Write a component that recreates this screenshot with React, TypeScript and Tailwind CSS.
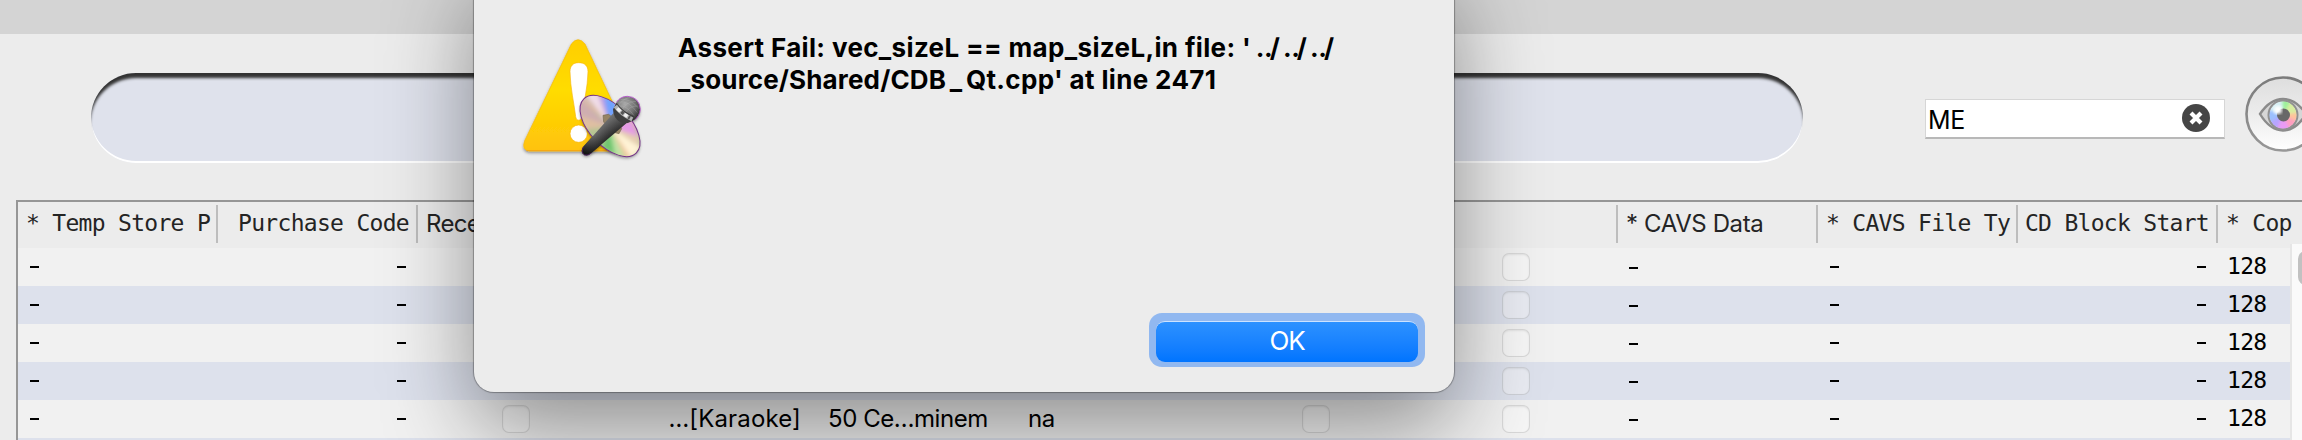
import React from 'react';

const mono = 'font-["DejaVu_Sans_Mono",monospace]';

type RowData = { artist?: boolean; title?: string; shaded?: boolean };

const rows: RowData[] = [
  {},
  { shaded: true },
  {},
  { shaded: true, title: '…[Karaoke]' },
  { title: '…[Karaoke]', artist: true },
];

function Check() {
  return (
    <span className="block h-7 w-7 rounded-[7px] border border-black/12 bg-white/35 shadow-[inset_0_1px_2px_rgba(0,0,0,0.08)]" />
  );
}

function Dash({ sans = false }: { sans?: boolean }) {
  return <span className={`block h-[2px] w-[9px] bg-black ${sans ? 'mt-[2px]' : ''}`} />;
}

function HeadCell({ children, className = '' }: { children?: React.ReactNode; className?: string }) {
  return (
    <div className="flex h-[46px] w-[200px] shrink-0 pt-[3px]">
      <div
        className={`flex h-[38px] w-full items-center overflow-hidden whitespace-pre border-r-2 border-[#bdbdbd] text-[23px] tracking-[-0.7px] text-[#242424] ${className}`}
      >
        {children}
      </div>
    </div>
  );
}

function Cell({ children, className = '' }: { children?: React.ReactNode; className?: string }) {
  return (
    <div className={`flex h-[38px] w-[200px] shrink-0 items-center whitespace-pre text-[24px] leading-none text-black ${className}`}>
      {children}
    </div>
  );
}

function Row({ row }: { row: RowData }) {
  return (
    <div className={`flex h-[38px] ${row.shaded ? 'bg-[#dde1ec]' : 'bg-[#f1f1f1]'}`}>
      <Cell className="pl-3"><Dash /></Cell>
      <Cell className="justify-end pr-3"><Dash /></Cell>
      <Cell className="pl-[84px]">{row.artist && <Check />}</Cell>
      <Cell className="justify-end pr-[17px] tracking-[0.15px]">{row.title}</Cell>
      <Cell className="pl-[10px] tracking-[-0.45px]">{row.artist && '50 Ce…minem'}</Cell>
      <Cell className="pl-[10px] tracking-[-0.5px]">{row.artist && 'na'}</Cell>
      <Cell className="pl-[84px]">{row.artist && <Check />}</Cell>
      <Cell className="pl-[84px]"><Check /></Cell>
      <Cell className="pl-[11px]"><Dash sans /></Cell>
      <Cell className="pl-3"><Dash /></Cell>
      <Cell className="justify-end pr-3"><Dash /></Cell>
      <Cell className={`pb-px pl-[9px] tracking-[-0.7px] ${mono} !text-[23px]`}>128</Cell>
    </div>
  );
}

function AlertIcon() {
  return (
    <svg width="150" height="150" viewBox="0 0 450 450">
      <defs>
        <linearGradient id="tri" x1="0" y1="0" x2="0" y2="1">
          <stop offset="0" stopColor="#ffce00" />
          <stop offset=".45" stopColor="#ffdc00" />
          <stop offset="1" stopColor="#ffc20a" />
        </linearGradient>
        <linearGradient id="disc" x1="0" y1="0" x2="1" y2="1">
          <stop offset="0" stopColor="#cfc5d0" />
          <stop offset=".35" stopColor="#d9b9a4" />
          <stop offset=".6" stopColor="#a7cf95" />
          <stop offset="1" stopColor="#f0dfb8" />
        </linearGradient>
        <linearGradient id="handle" gradientUnits="userSpaceOnUse" x1="250" y1="322" x2="290" y2="362">
          <stop offset="0" stopColor="#858585" />
          <stop offset=".35" stopColor="#696969" />
          <stop offset="1" stopColor="#242424" />
        </linearGradient>
        <linearGradient id="handleShade" gradientUnits="userSpaceOnUse" x1="320" y1="290" x2="222" y2="398">
          <stop offset="0" stopColor="#777" stopOpacity=".3" />
          <stop offset=".6" stopColor="#333" stopOpacity=".1" />
          <stop offset="1" stopColor="#000" stopOpacity=".75" />
        </linearGradient>
        <radialGradient id="head" cx=".4" cy=".3" r=".7">
          <stop offset="0" stopColor="#aaa" />
          <stop offset=".6" stopColor="#707070" />
          <stop offset="1" stopColor="#303030" />
        </radialGradient>
        <filter id="soft" x="-20%" y="-20%" width="140%" height="140%">
          <feDropShadow dx="0" dy="5" stdDeviation="4" floodColor="#000" floodOpacity=".4" />
        </filter>
        <filter id="blurDisc" x="-10%" y="-10%" width="120%" height="120%"><feGaussianBlur stdDeviation="6" /></filter>
        <clipPath id="discClip"><ellipse cx="300" cy="318" rx="113" ry="61" transform="rotate(46 300 318)" /></clipPath>
      </defs>
      <path
        d="M184 72 Q204 46 225 72 L364 365 Q372 393 350 393 H58 Q34 390 44 362 Z"
        fill="url(#tri)" stroke="#f5b80c" strokeWidth="2" filter="url(#soft)"
      />
      <path d="M49 392 H352" stroke="#f3a414" strokeWidth="3" />
      <path
        d="M180 155 C180 138 189 128 206 128 C225 128 234 138 234 155 C233 205 221 248 215 290 C213 304 199 304 197 290 C192 248 181 205 180 155Z"
        fill="#fff" stroke="#f8b60e" strokeWidth="2"
      />
      <circle cx="206" cy="341" r="26" fill="#fff" stroke="#f8b60e" strokeWidth="2" />
      <g filter="url(#soft)">
        <ellipse cx="300" cy="318" rx="113" ry="61" transform="rotate(46 300 318)" fill="url(#disc)" />
        <circle cx="352" cy="268" r="38" fill="#555" />
        <path d="M310 280 L349 310 L243 400 Q228 412 218 400 Q212 392 220 380 Z" fill="#333" />
      </g>
      <g clipPath="url(#discClip)">
        <g filter="url(#blurDisc)">
          <path d="M299 319 L190 220 L215 320Z" fill="#cfaeb0" />
          <path d="M299 319 L205 285 L225 350Z" fill="#dfbfa2" />
          <path d="M299 319 L225 220 L262 220Z" fill="#f1dde8" />
          <path d="M299 319 L262 215 L285 230Z" fill="#c59de0" />
          <path d="M299 319 L280 225 L315 240 L325 270Z" fill="#6fa2ff" />
          <path d="M299 319 L215 330 L270 390Z" fill="#b5c493" />
          <path d="M299 319 L275 385 L322 410Z" fill="#6fc66f" />
          <path d="M299 319 L315 405 L345 410Z" fill="#bfe2a6" />
          <path d="M299 319 L345 410 L375 415Z" fill="#f2c79f" />
          <path d="M299 319 L365 415 L395 385Z" fill="#fff3d5" />
          <path d="M299 319 L395 385 L385 345Z" fill="#e6cdb0" />
          <path d="M299 319 L385 350 L365 300Z" fill="#e59ae6" />
        </g>
      </g>
      <ellipse cx="300" cy="318" rx="113" ry="61" transform="rotate(46 300 318)" fill="none" stroke="#75308a" strokeWidth="3" />
      <path d="M279 286 L296 283 L322 304 L335 326 L327 341 L308 336 L281 306Z" fill="#968466" stroke="#756a50" strokeWidth="2" />
      <path d="M310 280 L349 310 L243 400 Q228 412 218 400 Q212 392 220 380 Z" fill="url(#handle)" />
      <path d="M310 280 L349 310 L243 400 Q228 412 218 400 Q212 392 220 380 Z" fill="url(#handleShade)" />
      <path d="M220 381 Q212 398 224 405 Q234 408 244 399" fill="none" stroke="#4b215c" strokeWidth="3" />
      <circle cx="352" cy="268" r="38" fill="url(#head)" />
      <g stroke="#b7b7b7" strokeOpacity=".45" strokeWidth="2" fill="none">
        <path d="M326 246 Q355 240 382 278 M332 238 Q362 235 387 266 M325 257 Q354 257 374 290" />
        <path d="M378 244 Q347 244 333 275 M386 258 Q356 256 344 283 M360 232 Q332 238 323 263" />
      </g>
      <path d="M309 268 L320 248 Q337 274 375 289 L360 306 Q348 314 330 306 Q309 293 309 268Z" fill="#3f3f3f" />
      <path d="M316 258 Q332 281 367 298" fill="none" stroke="#b2b2b2" strokeWidth="12" />
      <path d="M322 265 l9 9 M343 283 l9 6" stroke="#f0f0f0" strokeWidth="10" />
      <path d="M334 275 l7 6 M355 291 l5 3" stroke="#555" strokeWidth="10" />
      <path d="M320 246 Q332 229 352 229 Q388 231 391 268 Q389 288 374 300" fill="none" stroke="#b45ac8" strokeWidth="3" />
    </svg>
  );
}

function EyeIcon() {
  return (
    <svg width="78" height="78" viewBox="0 0 78 78" className="shrink-0">
      <defs>
        <linearGradient id="eyeBg" x1="0" y1="0" x2="0" y2="1">
          <stop offset="0" stopColor="#dedede" />
          <stop offset=".5" stopColor="#ececec" />
          <stop offset="1" stopColor="#fff" />
        </linearGradient>
        <linearGradient id="ring" x1="0" y1="0" x2="0" y2="1">
          <stop offset="0" stopColor="#7b7b7b" />
          <stop offset="1" stopColor="#979797" />
        </linearGradient>
        <filter id="irisBlur"><feGaussianBlur stdDeviation="1.6" /></filter>
        <clipPath id="irisClip"><circle cx="39" cy="40" r="13.5" /></clipPath>
      </defs>
      <circle cx="39" cy="39" r="36.5" fill="url(#eyeBg)" stroke="url(#ring)" strokeWidth="2.6" />
      <path d="M16 39 Q26 24 39 24 Q52 24 62 39 Q52 55.5 39 55.5 Q26 55.5 16 39Z" fill="#d6d6d6" stroke="#8b8b8b" strokeWidth="2.4" />
      <circle cx="39" cy="40" r="15.5" fill="#919191" />
      <g clipPath="url(#irisClip)">
        <circle cx="39" cy="40" r="13.5" fill="#ddd" />
        <g filter="url(#irisBlur)">
          <path d="M39 40 L25 36 L30 24 L40 22Z" fill="#d8f0f5" />
          <path d="M39 40 L38 22 L50 26Z" fill="#9df09a" />
          <path d="M39 40 L48 24 L57 40Z" fill="#d8eea0" />
          <path d="M39 40 L57 37 L54 50Z" fill="#ffc39c" />
          <path d="M39 40 L55 47 L43 57Z" fill="#ff9fc0" />
          <path d="M39 40 L47 57 L30 56Z" fill="#e99bf5" />
          <path d="M39 40 L32 57 L23 45Z" fill="#b7a4ff" />
          <path d="M39 40 L24 48 L22 34Z" fill="#9cc0ff" />
        </g>
        <circle cx="39.5" cy="40" r="6.5" fill="#686868" />
        <circle cx="34" cy="35" r="4" fill="#fff" filter="url(#irisBlur)" />
      </g>
    </svg>
  );
}

function Pill() {
  return (
    <div className="h-[90px] w-[1712px] shrink-0 overflow-hidden rounded-[45px] bg-[#dfe2ec] shadow-[inset_0_6px_3px_-1px_#333,inset_0_-2px_0_0_#fff]" />
  );
}

export default function App() {
  return (
    <div className='relative flex h-[440px] w-[2302px] flex-col overflow-hidden bg-[#ececec] font-["Inter",sans-serif]'>
      <div className="h-[34px] shrink-0 bg-[#d4d4d4]" />
      <div className="flex h-[166px] shrink-0 items-start pl-[91px] pt-[39px]">
        <Pill />
        <div className="ml-[122px] mt-[26px] flex h-10 w-[300px] shrink-0 items-center border border-b-2 border-[#d6d6d6] border-b-[#b8b8b8] bg-white pl-[2px] pr-[14px]">
          <span className="flex-1 pt-[3px] text-[25px] leading-none tracking-[-0.3px] text-black">ME</span>
          <svg width="28" height="28" viewBox="0 0 28 28" className="-mt-px">
            <circle cx="14" cy="14" r="14" fill="#454545" />
            <path d="M9 9 L19 19 M19 9 L9 19" stroke="#fff" strokeWidth="4.2" />
          </svg>
        </div>
        <div className="ml-[19px] mt-[2px]"><EyeIcon /></div>
      </div>

      <div className="flex h-[240px] shrink-0 pl-4">
        <div className="w-[2286px] shrink-0 overflow-hidden border-l-2 border-t-2 border-[#969696]">
          <div className="flex w-[2400px]">
            <HeadCell className={`pb-px pl-2 ${mono}`}>* Temp Store P</HeadCell>
            <HeadCell className={`justify-end pb-px pr-[7px] ${mono}`}>Purchase Code</HeadCell>
            <HeadCell className="pl-2 !text-[24px]">Rece</HeadCell>
            <HeadCell />
            <HeadCell />
            <HeadCell />
            <HeadCell />
            <HeadCell />
            <HeadCell className="pl-2 !text-[24px] !tracking-[-0.4px]">* CAVS Data</HeadCell>
            <HeadCell className={`pb-px pl-2 ${mono}`}>* CAVS File Ty</HeadCell>
            <HeadCell className={`justify-end pb-px pr-[7px] ${mono}`}>CD Block Start</HeadCell>
            <HeadCell className={`pb-px pl-2 ${mono}`}>* Cop</HeadCell>
          </div>
          <div className="flex">
            <div className="h-[192px] w-[2272px] shrink-0 overflow-hidden">
              {rows.map((row, i) => (
                <Row key={i} row={row} />
              ))}
              <div className="h-[2px] bg-[#dde1ec]" />
            </div>
            <div className="-mt-1 h-[196px] w-3 shrink-0 border-l-2 border-[#e6e6e6] bg-[#fafafa] pl-[6px] pt-[7px]">
              <div className="h-[34px] w-4 rounded-[8px] bg-[#c1c1c1]" />
            </div>
          </div>
        </div>
      </div>

      <div className="absolute -top-10 left-[474px] h-[432px] w-[980px] rounded-[20px] bg-[#ececec] pt-10 shadow-[0_0_1px_1px_rgba(0,0,0,0.3),0_36px_90px_rgba(0,0,0,0.42)]">
        <div className="flex h-[313px] pl-9 pt-5">
          <AlertIcon />
          <div className="ml-[18px] mt-3 whitespace-pre text-[26px] font-bold leading-8 tracking-[0.35px] text-black">
            <p>
              Assert Fail: vec_sizeL == map_sizeL,in file: <span className="tracking-[5px]">'</span>
              <span className="tracking-[-0.4px]">.</span><span className="tracking-[-3px]">.</span><span className="tracking-[3px]">/</span>
              <span className="tracking-[-0.4px]">.</span><span className="tracking-[-3px]">.</span><span className="tracking-[3px]">/</span>
              <span className="tracking-[-0.4px]">.</span><span className="tracking-[-3px]">.</span>/
            </p>
            <p>
              <span className="tracking-[0.15px]">_source/Shared/CD</span><span className="tracking-[3.8px]">B_</span>Qt.cpp' at line 2471
            </p>
          </div>
        </div>
        <div className="flex justify-end pr-[29px]">
          <div className="h-[54px] w-[276px] rounded-[13px] bg-[#91b8f0] px-[7px] pt-2">
            <button className="flex h-[41px] w-[262px] items-center justify-center rounded-[9px] border-t border-white/80 bg-linear-to-b from-[#2c91ff] to-[#0074ff] pb-[2px] text-[26px] leading-none tracking-[-1.2px] text-white">
              OK
            </button>
          </div>
        </div>
      </div>
    </div>
  );
}
